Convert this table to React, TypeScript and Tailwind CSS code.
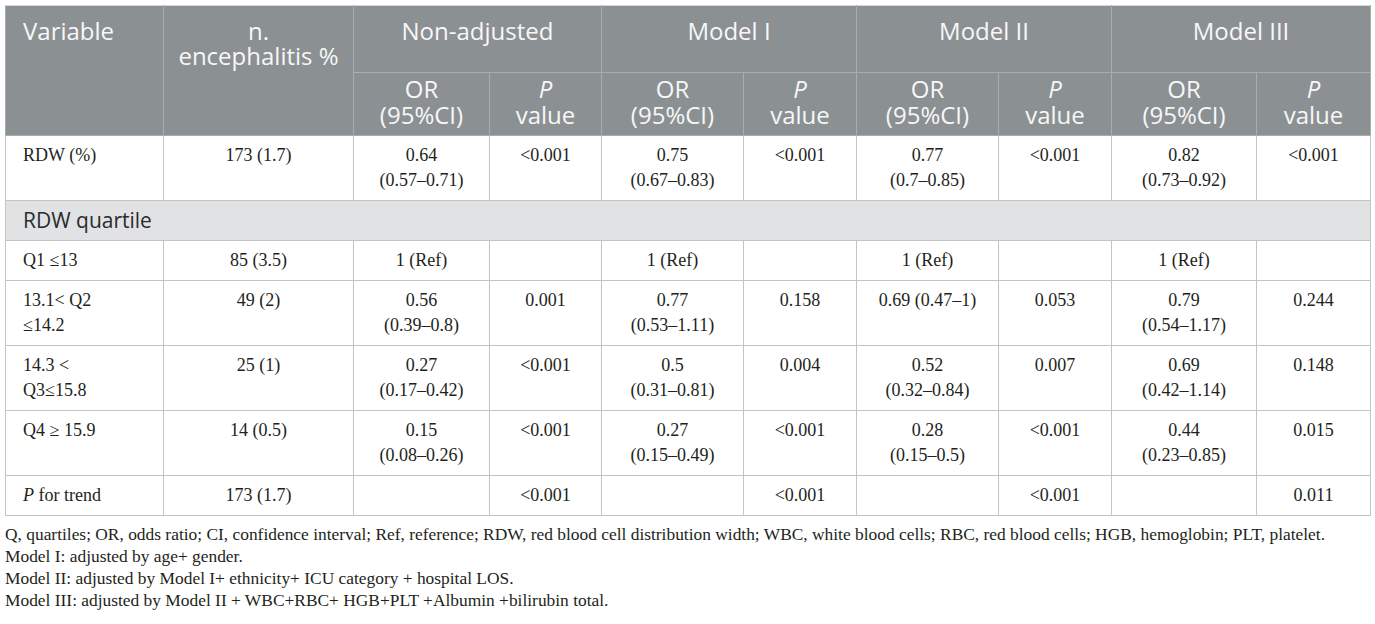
import React from 'react';

type Cell = string | [string, string];

interface Row {
  label: React.ReactNode;
  n: string;
  cells: Cell[];
}

const widths = ['w-[158px]', 'w-[190px]', 'w-[136px]', 'w-[112px]', 'w-[142px]', 'w-[113px]', 'w-[142px]', 'w-[113px]', 'w-[145px]', 'w-[114px]'];

const topRows: Row[] = [
  {
    label: 'RDW (%)',
    n: '173 (1.7)',
    cells: [['0.64', '(0.57–0.71)'], '<0.001', ['0.75', '(0.67–0.83)'], '<0.001', ['0.77', '(0.7–0.85)'], '<0.001', ['0.82', '(0.73–0.92)'], '<0.001'],
  },
];

const quartileRows: Row[] = [
  {
    label: 'Q1 ≤13',
    n: '85 (3.5)',
    cells: ['1 (Ref)', '', '1 (Ref)', '', '1 (Ref)', '', '1 (Ref)', ''],
  },
  {
    label: <>13.1&lt; Q2<br />≤14.2</>,
    n: '49 (2)',
    cells: [['0.56', '(0.39–0.8)'], '0.001', ['0.77', '(0.53–1.11)'], '0.158', '0.69 (0.47–1)', '0.053', ['0.79', '(0.54–1.17)'], '0.244'],
  },
  {
    label: <>14.3 &lt;<br />Q3≤15.8</>,
    n: '25 (1)',
    cells: [['0.27', '(0.17–0.42)'], '<0.001', ['0.5', '(0.31–0.81)'], '0.004', ['0.52', '(0.32–0.84)'], '0.007', ['0.69', '(0.42–1.14)'], '0.148'],
  },
  {
    label: 'Q4 ≥ 15.9',
    n: '14 (0.5)',
    cells: [['0.15', '(0.08–0.26)'], '<0.001', ['0.27', '(0.15–0.49)'], '<0.001', ['0.28', '(0.15–0.5)'], '<0.001', ['0.44', '(0.23–0.85)'], '0.015'],
  },
  {
    label: <><i>P</i> for trend</>,
    n: '173 (1.7)',
    cells: ['', '<0.001', '', '<0.001', '', '<0.001', '', '0.011'],
  },
];

const td = 'border border-[#c4c4c4] px-1 pt-[7px] pb-[7px] align-top text-center';

const DataRow: React.FC<{ row: Row }> = ({ row }) => (
  <tr>
    <td className="border border-[#c4c4c4] pl-[17px] pr-2 pt-[7px] pb-[7px] align-top text-left">{row.label}</td>
    <td className={td}>{row.n}</td>
    {row.cells.map((c, i) => (
      <td key={i} className={td}>
        {Array.isArray(c) ? (
          <>
            {c[0]}
            <br />
            {c[1]}
          </>
        ) : (
          c
        )}
      </td>
    ))}
  </tr>
);

const th = 'border border-[#a9adb0] font-normal';

const App: React.FC = () => {
  return (
    <div className="min-h-screen w-full bg-white pt-[5px] pl-[5px] pr-[5px]">
      <table className="table-fixed border-collapse w-[1365px] font-['Liberation_Serif',serif] text-[18px] leading-[25px] text-[#231f20]">
        <colgroup>
          {widths.map((w, i) => (
            <col key={i} className={w} />
          ))}
        </colgroup>
        <thead className="bg-[#8b9093] text-[#f7f7f7] font-['Open_Sans',sans-serif] text-[24px] leading-[25px]">
          <tr className="h-[67px]">
            <th rowSpan={2} className={`${th} border-t-[#d5d7d8] text-left align-top pl-[17px] pt-[12px]`}>Variable</th>
            <th rowSpan={2} className={`${th} border-t-[#d5d7d8] text-center align-top pt-[12px]`}>
              n.
              <br />
              encephalitis %
            </th>
            {['Non-adjusted', 'Model I', 'Model II', 'Model III'].map((m) => (
              <th key={m} colSpan={2} className={`${th} border-t-[#d5d7d8] text-center align-top pt-[12px]`}>
                {m}
              </th>
            ))}
          </tr>
          <tr className="h-[63px] leading-[26px]">
            {[0, 1, 2, 3].map((i) => (
              <React.Fragment key={i}>
                <th className={`${th} text-center align-middle pb-1`}>
                  OR
                  <br />
                  (95%CI)
                </th>
                <th className={`${th} text-center align-middle pb-1`}>
                  <i>P</i>
                  <br />
                  value
                </th>
              </React.Fragment>
            ))}
          </tr>
        </thead>
        <tbody>
          {topRows.map((r, i) => (
            <DataRow key={i} row={r} />
          ))}
          <tr className="bg-[#e1e2e3]">
            <td colSpan={10} className="border border-[#c4c4c4] pl-[17px] pt-[7px] pb-[7px] font-['Open_Sans',sans-serif] text-[21px] leading-[25px] text-[#2b2b2b]">
              RDW quartile
            </td>
          </tr>
          {quartileRows.map((r, i) => (
            <DataRow key={i} row={r} />
          ))}
        </tbody>
      </table>
      <div className="mt-[7px] font-['Liberation_Serif',serif] text-[17.4px] leading-[22px] text-[#231f20]">
        <p>
          Q, quartiles; OR, odds ratio; CI, confidence interval; Ref, reference; RDW, red blood cell distribution width; WBC, white blood cells; RBC, red blood cells; HGB, hemoglobin; PLT, platelet.
        </p>
        <p>Model I: adjusted by age+ gender.</p>
        <p>Model II: adjusted by Model I+ ethnicity+ ICU category + hospital LOS.</p>
        <p>Model III: adjusted by Model II + WBC+RBC+ HGB+PLT +Albumin +bilirubin total.</p>
      </div>
    </div>
  );
};

export default App;
